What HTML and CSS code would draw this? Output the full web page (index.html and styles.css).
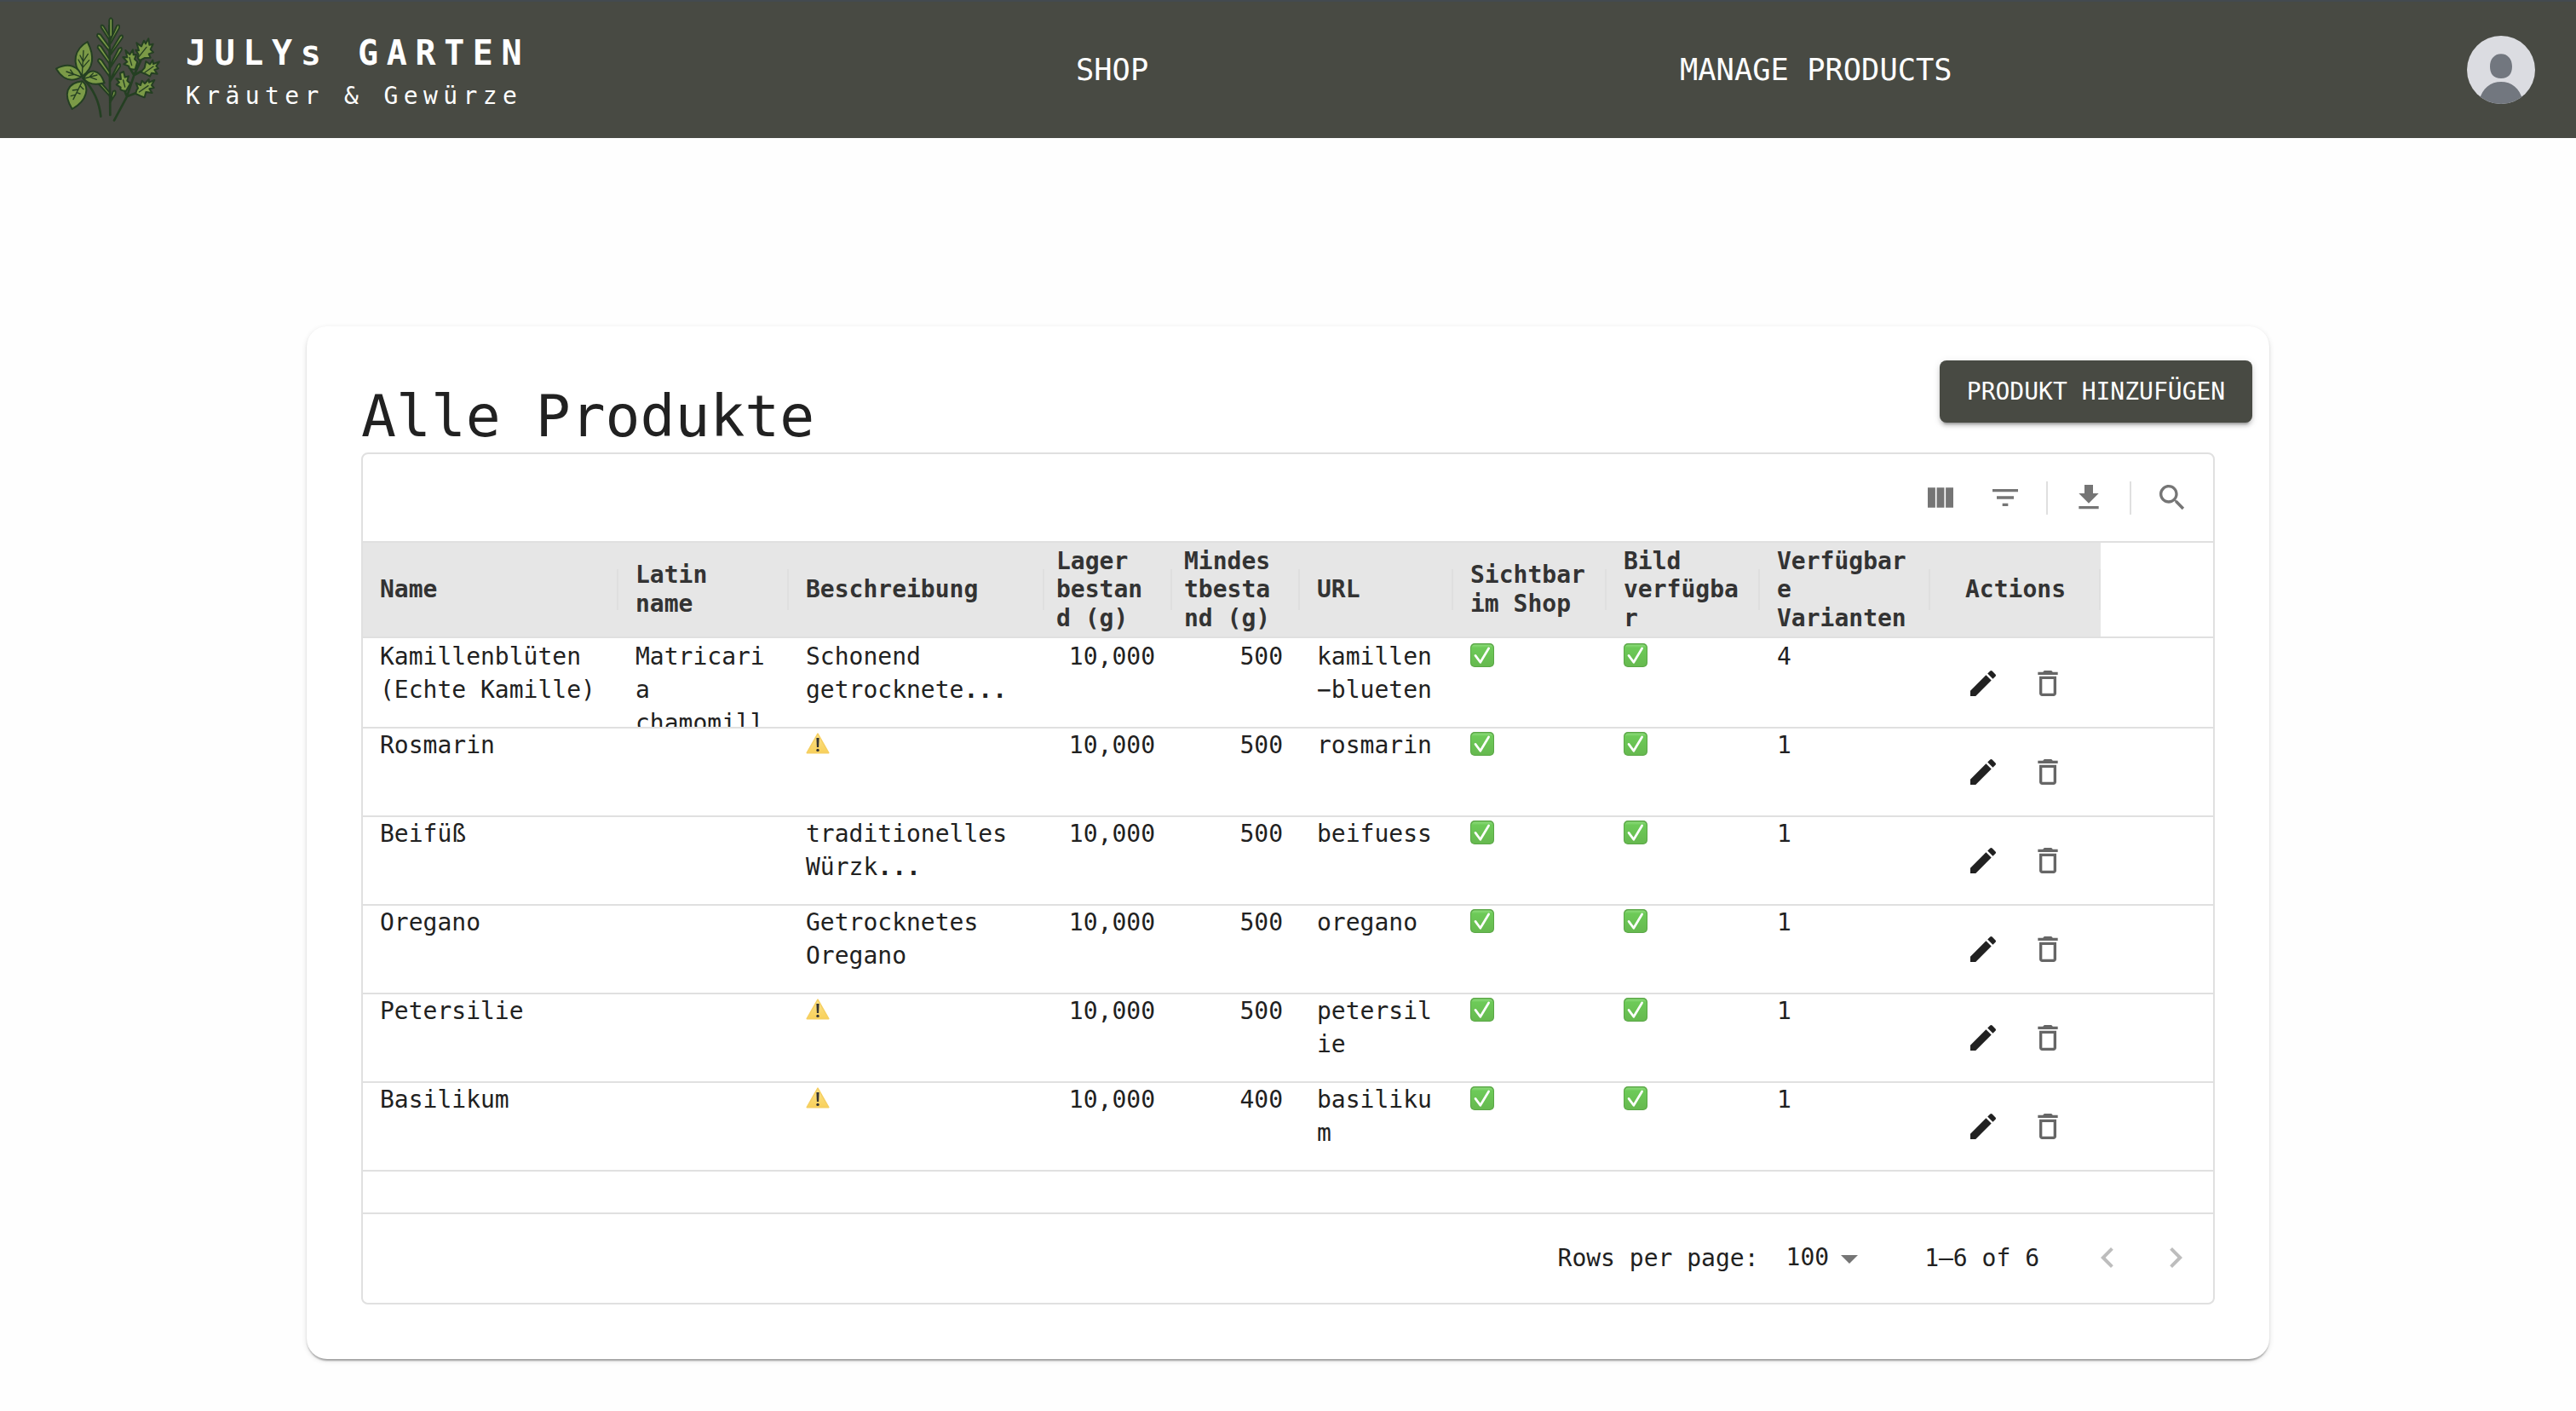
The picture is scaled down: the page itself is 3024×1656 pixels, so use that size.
FILE: index.html
```html
<!DOCTYPE html>
<html lang="de">
<head>
<meta charset="utf-8">
<title>JULYs GARTEN – Manage Products</title>
<link rel="stylesheet" href="styles.css">
</head>
<body>
<svg class="defs" width="0" height="0">
  <symbol id="edit" viewBox="0 0 24 24"><path d="M3 17.25V21h3.75L17.81 9.94l-3.75-3.75L3 17.25zM20.71 7.04c.39-.39.39-1.02 0-1.41l-2.34-2.34a.9959.9959 0 0 0-1.41 0l-1.83 1.83 3.75 3.75 1.83-1.83z"/></symbol>
  <symbol id="trash" viewBox="0 0 24 24"><path d="M6 19c0 1.1.9 2 2 2h8c1.1 0 2-.9 2-2V7H6v12zM8 9h8v10H8V9zm7.5-5l-1-1h-5l-1 1H5v2h14V4h-3.5z"/></symbol>
  <symbol id="check" viewBox="0 0 28 28"><rect width="28" height="28" rx="5" fill="#5aa746"/><rect x="1" y="1.4" width="26" height="25.6" rx="4.4" fill="url(#green)"/><path d="M6 14.4l5.8 7.900L21.600 6" fill="none" stroke="#fff" stroke-width="2.7" stroke-linecap="round" stroke-linejoin="round"/></symbol>
  <symbol id="warn" viewBox="0 0 28 25"><path d="M14 1.2L26.8 23.6H1.2z" fill="url(#yellow)" stroke="#f5cf62" stroke-width="1.6" stroke-linejoin="round"/><path d="M12.4 6h3.200l-.5 11h-2.200z" fill="#333"/><circle cx="14" cy="20.4" r="1.7" fill="#333"/></symbol>
  <linearGradient id="green" x1="0" y1="0" x2="0" y2="1"><stop offset="0" stop-color="#8fdd7d"/><stop offset=".15" stop-color="#6dca58"/><stop offset="1" stop-color="#66b94f"/></linearGradient>
  <linearGradient id="yellow" x1="0" y1="0" x2="0" y2="1"><stop offset="0" stop-color="#fbe38c"/><stop offset="1" stop-color="#f8d05a"/></linearGradient>
</svg>

<header class="topbar">
  <a class="brand">
    <svg class="logo" viewBox="0 0 450 435">
      <g fill="#7b9a47" stroke="#243f22" stroke-width="6" stroke-linejoin="round" stroke-linecap="round">
        <path d="M142 245C168 272 198 312 205 380M235 60L238 375M252 394L297 310L322 235L345 185M297 310L287 285M297 310L330 297M322 235L310 215M322 235L345 222" fill="none" stroke-width="8"/>
        <path d="M235 110V40Q240 28 246 40V95Z"/>
        <path d="M236 112L206 66Q204 54 215 62L236 98ZM237 115L262 60Q272 54 270 68L240 122Z"/>
        <path d="M236 152L192 97Q192 84 204 92L236 136ZM238 155L272 98Q284 90 282 102L240 162Z"/>
        <path d="M236 195L194 138Q194 124 206 134L236 180ZM238 200L268 142Q280 132 278 146L240 206Z"/>
        <path d="M236 240L195 185Q196 172 208 182L236 224ZM238 250L264 200Q275 188 273 204L240 254Z"/>
        <path d="M236 308L196 264Q202 258 212 268L236 296ZM238 330L248 292Q260 284 256 302Z"/>
        <path d="M140 238C98 192 114 142 158 117C184 168 182 208 140 238Z"/>
        <path d="M138 240C104 260 72 252 48 212C92 188 128 204 138 240Z"/>
        <path d="M144 246C164 210 200 210 218 262C182 272 158 264 144 246Z"/>
        <path d="M140 256C164 276 160 322 104 354C72 302 84 262 140 256Z"/>
        <path d="M342 183Q331 172 338 162L328 146L339 148L331 121L348 133L357 113L363 124L373 106L376 128L389 125L380 144L390 154L374 160L380 173L360 174Z"/>
        <path d="M326 214Q302 216 304 203L286 196L298 188L283 171L298 172L292 147L307 162L318 145L320 163L330 162L324 178L334 188Z"/>
        <path d="M346 224L359 209L364 186L378 196L388 182L390 195L411 187L400 203L408 211L394 216L404 230L384 227L378 239L364 231Z"/>
        <path d="M294 290Q269 290 275 278L260 268L270 260L259 247L276 249L273 228L285 222L290 242L303 238L298 254L309 264Z"/>
        <path d="M328 300Q331 284 336 281L329 262L345 270L350 254L360 264L374 249L375 260L394 252L384 270L392 279L376 283L386 297L364 294L359 313L345 308Z"/>
      </g>
      <g fill="none" stroke="#243f22" stroke-width="4" stroke-linecap="round">
        <path d="M139 236L144 148M140 205L126 180M141 208L164 182M142 185L132 165M142 188L160 160M134 240L84 222M112 232L92 236M108 230L98 216M148 246L192 234M166 241L190 250M166 240L178 228M138 260L108 320M126 285L106 288M120 296L132 300M114 304L100 308M132 272L144 284M335 175L366 136M314 200L306 172M360 225L390 204M290 276L284 252M340 294L372 272"/>
      </g>
    </svg>
    <span class="brand-text"><strong>JULYs GARTEN</strong><span>Kräuter &amp; Gewürze</span></span>
  </a>
  <a class="nav-shop">SHOP</a>
  <a class="nav-manage">MANAGE PRODUCTS</a>
  <svg class="avatar" viewBox="0 0 80 80"><clipPath id="round"><circle cx="40" cy="40" r="40"/></clipPath><g clip-path="url(#round)"><path fill="#dbdce1" d="M0 0h80v80H0z"/><path fill="#72777f" d="M40 21.300C48 21.300 53 27.500 53 36C53 44.500 49 50 40 50S27 44.500 27 36C27 27.500 32 21.300 40 21.300zM14.500 76C18 61 28 54 40 54S62 61 65.500 76V80H14.500z"/></g></svg>
</header>

<main class="card">
  <div class="card-head">
    <h1>Alle Produkte</h1>
    <button class="add">PRODUKT HINZUFÜGEN</button>
  </div>
  <section class="grid">
    <div class="toolbar">
      <svg class="ic" viewBox="0 0 24 24"><path d="M14.67 5v14H9.33V5zM15.67 19H21V5h-5.33zM8.330 19V5H3v14z"/></svg>
      <svg class="ic" viewBox="0 0 24 24"><path d="M10 18h4v-2h-4zM3 6v2h18V6zM6 13h12v-2H6z"/></svg>
      <i class="divider"></i>
      <svg class="ic" viewBox="0 0 24 24"><path d="M5 20h14v-2H5zM19 9h-4V3H9v6H5l7 7z"/></svg>
      <i class="divider"></i>
      <svg class="ic" viewBox="0 0 24 24"><path d="M15.500 14h-.79l-.28-.27C15.410 12.590 16 11.110 16 9.500 16 5.910 13.090 3 9.500 3S3 5.910 3 9.500 5.910 16 9.500 16c1.610 0 3.090-.59 4.230-1.570l.27.28v.79l5 4.990L20.490 19l-4.990-5zm-6 0C7.010 14 5 11.990 5 9.500S7.010 5 9.500 5 14 7.010 14 9.500 11.990 14 9.500 14z"/></svg>
    </div>
    <div class="row head">
      <div>Name</div><div>Latin<br>name</div><div>Beschreibung</div><div class="tight">Lager<br>bestan<br>d (g)</div><div class="tight">Mindes<br>tbesta<br>nd (g)</div><div>URL</div><div>Sichtbar<br>im Shop</div><div>Bild<br>verfügba<br>r</div><div>Verfügbar<br>e<br>Varianten</div><div class="mid">Actions</div>
    </div>
    <div class="rows">
      <div class="row"><div>Kamillenblüten (Echte Kamille)</div><div>Matricaria chamomilla</div><div>Schonend getrocknete<b>...</b></div><div class="num">10,000</div><div class="num">500</div><div>kamillen<br>−blueten</div><div><svg class="check"><use href="#check"/></svg></div><div><svg class="check"><use href="#check"/></svg></div><div>4</div><div class="actions"><svg class="edit"><use href="#edit"/></svg><svg><use href="#trash"/></svg></div></div>
      <div class="row"><div>Rosmarin</div><div></div><div><svg class="warn"><use href="#warn"/></svg></div><div class="num">10,000</div><div class="num">500</div><div>rosmarin</div><div><svg class="check"><use href="#check"/></svg></div><div><svg class="check"><use href="#check"/></svg></div><div>1</div><div class="actions"><svg class="edit"><use href="#edit"/></svg><svg><use href="#trash"/></svg></div></div>
      <div class="row"><div>Beifüß</div><div></div><div>traditionelles Würzk<b>...</b></div><div class="num">10,000</div><div class="num">500</div><div>beifuess</div><div><svg class="check"><use href="#check"/></svg></div><div><svg class="check"><use href="#check"/></svg></div><div>1</div><div class="actions"><svg class="edit"><use href="#edit"/></svg><svg><use href="#trash"/></svg></div></div>
      <div class="row"><div>Oregano</div><div></div><div>Getrocknetes Oregano</div><div class="num">10,000</div><div class="num">500</div><div>oregano</div><div><svg class="check"><use href="#check"/></svg></div><div><svg class="check"><use href="#check"/></svg></div><div>1</div><div class="actions"><svg class="edit"><use href="#edit"/></svg><svg><use href="#trash"/></svg></div></div>
      <div class="row"><div>Petersilie</div><div></div><div><svg class="warn"><use href="#warn"/></svg></div><div class="num">10,000</div><div class="num">500</div><div>petersilie</div><div><svg class="check"><use href="#check"/></svg></div><div><svg class="check"><use href="#check"/></svg></div><div>1</div><div class="actions"><svg class="edit"><use href="#edit"/></svg><svg><use href="#trash"/></svg></div></div>
      <div class="row"><div>Basilikum</div><div></div><div><svg class="warn"><use href="#warn"/></svg></div><div class="num">10,000</div><div class="num">400</div><div>basilikum</div><div><svg class="check"><use href="#check"/></svg></div><div><svg class="check"><use href="#check"/></svg></div><div>1</div><div class="actions"><svg class="edit"><use href="#edit"/></svg><svg><use href="#trash"/></svg></div></div>
    </div>
    <footer class="pager">
      <span>Rows per page:</span>
      <span class="size"><span>100</span><svg viewBox="0 0 24 24"><path d="M7 10l5 5 5-5z"/></svg></span>
      <span class="range">1–6 of 6</span>
      <svg class="prev" viewBox="0 0 24 24"><path d="M15.410 16.090l-4.580-4.590 4.580-4.590L14 5.500l-6 6 6 6z"/></svg>
      <svg class="next" viewBox="0 0 24 24"><path d="M8.590 16.090l4.580-4.590-4.580-4.590L10 5.500l6 6-6 6z"/></svg>
    </footer>
  </section>
</main>
</body>
</html>
```
FILE: styles.css
```css
* { box-sizing: border-box; }
body {
  margin: 0;
  height: 1656px;
  overflow: hidden;
  background: #fefefe;
  color: #212121;
  font: 28px/39.200px "DejaVu Sans Mono", monospace;
}
.defs { display: block; position: absolute; }
svg { display: block; flex: none; }

.topbar {
  display: flex;
  align-items: center;
  height: 162px;
  padding: 0 48px 0 50px;
  border-top: 2px solid #434a50;
  background: #484a43;
  color: #fff;
  font-size: 35.400px;
}
.brand { display: flex; align-items: center; width: 1213px; }
.logo { width: 150px; height: 145px; margin-top: 1px; }
.brand-text { display: flex; flex-direction: column; padding-top: 12px; margin-left: 18px; white-space: nowrap; }
.brand-text strong { font-size: 40px; line-height: 50px; letter-spacing: 9.600px; }
.brand-text span { font-size: 28px; line-height: 52px; letter-spacing: 6.400px; }
.nav-shop { width: 709px; }
.avatar { width: 80px; height: 80px; margin-left: auto; }

.card {
  width: 2304px;
  height: 1212px;
  margin: 221px auto 0;
  padding: 40px 64px 64px;
  border-radius: 24px;
  background: #fff;
  box-shadow: 0 4px 2px -2px rgba(0,0,0,.2), 0 2px 2px rgba(0,0,0,.14), 0 2px 6px rgba(0,0,0,.12);
}
.card-head { display: flex; justify-content: space-between; height: 108px; margin-right: -44px; }
h1 { margin: 24px 0 0; font-size: 68px; line-height: 84px; font-weight: 400; }
.add {
  width: 367px;
  height: 73px;
  padding: 0;
  border: 0;
  border-radius: 8px;
  background: #484a43;
  color: #fff;
  font: 28px/49px "DejaVu Sans Mono", monospace;
  box-shadow: 0 6px 2px -4px rgba(0,0,0,.2), 0 4px 4px rgba(0,0,0,.14), 0 2px 10px rgba(0,0,0,.12);
}

.grid { height: 1000px; border: 2px solid #e0e0e0; border-radius: 8px; }
.toolbar { display: flex; justify-content: flex-end; align-items: center; height: 102px; padding-right: 28px; }
.ic { width: 40px; height: 40px; fill: #757575; }
.ic + .ic { margin-left: 36px; }
.divider { width: 2px; height: 39px; margin: 0 28px; background: #e0e0e0; }

.row { display: grid; grid-template-columns: 300px 200px 300px 150px 150px 180px 180px 180px 200px 200px; }
.row > div { padding: 0 20px; overflow: hidden; overflow-wrap: anywhere; }
.head {
  height: 114px;
  border: solid #e0e0e0;
  border-width: 2px 0;
  background: linear-gradient(#e6e6e6, #e6e6e6) 0 0 / 2040px 100% no-repeat;
  color: #333;
  font-weight: 700;
  line-height: 33.600px;
}
.head > div {
  display: flex;
  align-items: center;
  background: linear-gradient(#dfdfdf, #dfdfdf) 100% 50% / 2px 48px no-repeat;
}
.head > .tight { padding: 0 0 0 14px; }
.head > .mid { justify-content: center; }
.rows { height: 676px; padding-top: 2px; border-bottom: 2px solid #e0e0e0; }
.rows .row { height: 104px; border-bottom: 2px solid #e0e0e0; }
.rows b { font-weight: 700; }
.num { text-align: right; }
.check { width: 28px; height: 28px; margin-top: 4px; }
.warn { width: 28px; height: 25px; margin-top: 5px; }
.actions { display: flex; justify-content: center; align-items: center; gap: 36px; }
.actions svg { width: 40px; height: 40px; fill: #666; }
.actions .edit { fill: #212121; }

.pager { display: flex; justify-content: flex-end; align-items: center; height: 104px; padding-right: 20px; white-space: nowrap; }
.size { display: flex; align-items: center; margin-left: 32px; }
.size span { padding-bottom: 2px; }
.size svg { width: 48px; height: 48px; fill: #757575; }
.range { margin-left: 64px; }
.prev, .next { width: 48px; height: 48px; fill: #bdbdbd; }
.prev { margin-left: 56px; }
.next { margin-left: 32px; }
```
